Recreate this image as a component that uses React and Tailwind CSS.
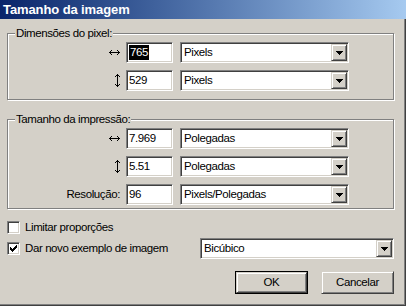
import React from 'react'

const FONT = "font-['Liberation_Sans',Arial,sans-serif]"
const TXT = 'text-[11.5px] tracking-[-0.4px]'
const SUNKEN =
  'border border-t-[#808080] border-l-[#808080] border-b-white border-r-white shadow-[inset_1px_1px_0_#404040,inset_-1px_-1px_0_#d4d0c8]'
const RAISED =
  'border border-t-[#d4d0c8] border-l-[#d4d0c8] border-b-[#404040] border-r-[#404040] shadow-[inset_1px_1px_0_#fff,inset_-1px_-1px_0_#808080]'

function Pixels({ rows, color = '#000' }) {
  const rects = []
  rows.forEach((row, y) => {
    row.split('').forEach((c, x) => {
      if (c === 'X') rects.push(<rect key={`${x}-${y}`} x={x} y={y} width="1" height="1" fill={color} />)
    })
  })
  return (
    <svg width={rows[0].length} height={rows.length} shapeRendering="crispEdges">
      {rects}
    </svg>
  )
}

const H_ARROW = [
  '..X.....X..',
  '.X.......X.',
  'XXXXXXXXXXX',
  '.X.......X.',
  '..X.....X..',
]

const V_ARROW = [
  '..X..',
  '.XXX.',
  'X.X.X',
  '..X..',
  '..X..',
  '..X..',
  '..X..',
  '..X..',
  '..X..',
  '..X..',
  'X.X.X',
  '.XXX.',
  '..X..',
]

const TRIANGLE = ['XXXXXXX', '.XXXXX.', '..XXX..', '...X...']

const CHECK = [
  '......X',
  '.....XX',
  'X...XXX',
  'XX.XXX.',
  'XXXXX..',
  '.XXX...',
  '..X....',
]

function Field({ children, width = 'w-[47px]' }) {
  return (
    <div className={`${width} h-[21px] bg-white ${SUNKEN} flex items-center pl-[2px] ${TXT} leading-none`}>
      {children}
    </div>
  )
}

function Combo({ value, width = 'w-[169px]' }) {
  return (
    <div className={`${width} h-[21px] bg-white ${SUNKEN} flex items-center ${TXT} leading-none`}>
      <span className="flex-1 pl-[3px]">{value}</span>
      <div className={`w-[16px] h-[17px] mr-[1px] bg-[#d4d0c8] ${RAISED} flex items-center justify-center`}>
        <Pixels rows={TRIANGLE} />
      </div>
    </div>
  )
}

function Row({ label, value, unit }) {
  return (
    <div className="flex items-center h-[21px]">
      <div className={`w-[112px] flex justify-end ${TXT}`}>{label}</div>
      <div className="ml-[6px]">
        <Field>{value}</Field>
      </div>
      <div className="ml-[7px]">
        <Combo value={unit} />
      </div>
    </div>
  )
}

function Group({ title, children, className = '' }) {
  return (
    <fieldset className={`border border-[#808080] shadow-[inset_1px_1px_0_#fff,1px_1px_0_#fff] ${className}`}>
      <legend className={`ml-[7px] px-[1px] ${TXT} leading-[14px] bg-[#d4d0c8]`}>{title}</legend>
      {children}
    </fieldset>
  )
}

function CheckBox({ checked }) {
  return (
    <div className={`w-[13px] h-[13px] bg-white ${SUNKEN} flex items-center justify-center`}>
      {checked && <Pixels rows={CHECK} />}
    </div>
  )
}

function Button({ children, isDefault }) {
  if (isDefault) {
    return (
      <div className="w-[73px] h-[23px] border border-black">
        <div className={`w-full h-full bg-[#d4d0c8] ${RAISED} flex items-center justify-center ${TXT}`}>
          {children}
        </div>
      </div>
    )
  }
  return (
    <div className={`w-[73px] h-[23px] bg-[#d4d0c8] ${RAISED} flex items-center justify-center ${TXT}`}>
      {children}
    </div>
  )
}

export default function App() {
  return (
    <div
      className={`w-[406px] h-[306px] bg-[#d4d0c8] text-black ${FONT} flex flex-col overflow-hidden shadow-[inset_-1px_-1px_0_#404040,inset_-2px_-2px_0_#808080]`}
    >
      {/* Title bar */}
      <div className="h-[19px] flex items-center px-[3px] bg-gradient-to-r from-[#0a246a] to-[#a6caf0]">
        <span className="text-white font-bold text-[13px] tracking-[-0.1px]">Tamanho da imagem</span>
      </div>

      <div className="pl-[7px] pr-[12px] flex flex-col">
        <Group title="Dimensões do pixel:" className="mt-[7px] pt-[2px] pb-[8px]">
          <div className="flex flex-col gap-[7px]">
            <Row
              label={<Pixels rows={H_ARROW} />}
              value={<span className="bg-black text-white px-[1px] py-[2px]">765</span>}
              unit="Pixels"
            />
            <Row label={<Pixels rows={V_ARROW} />} value="529" unit="Pixels" />
          </div>
        </Group>

        <Group title="Tamanho da impressão:" className="mt-[12px] pt-[2px] pb-[3px]">
          <div className="flex flex-col gap-[7px]">
            <Row label={<Pixels rows={H_ARROW} />} value="7.969" unit="Polegadas" />
            <Row label={<Pixels rows={V_ARROW} />} value="5.51" unit="Polegadas" />
            <Row label="Resolução:" value="96" unit="Pixels/Polegadas" />
          </div>
        </Group>

        <div className={`mt-[12px] flex items-center h-[13px] gap-[5px] ${TXT}`}>
          <CheckBox />
          <span>Limitar proporções</span>
        </div>

        <div className={`mt-[4px] flex items-center h-[21px] ${TXT}`}>
          <CheckBox checked />
          <span className="ml-[5px] flex-1">Dar novo exemplo de imagem</span>
          <Combo value="Bicúbico" width="w-[194px]" />
        </div>

        <div className="mt-[12px] flex justify-end gap-[13px]">
          <Button isDefault>OK</Button>
          <Button>Cancelar</Button>
        </div>
      </div>
    </div>
  )
}
